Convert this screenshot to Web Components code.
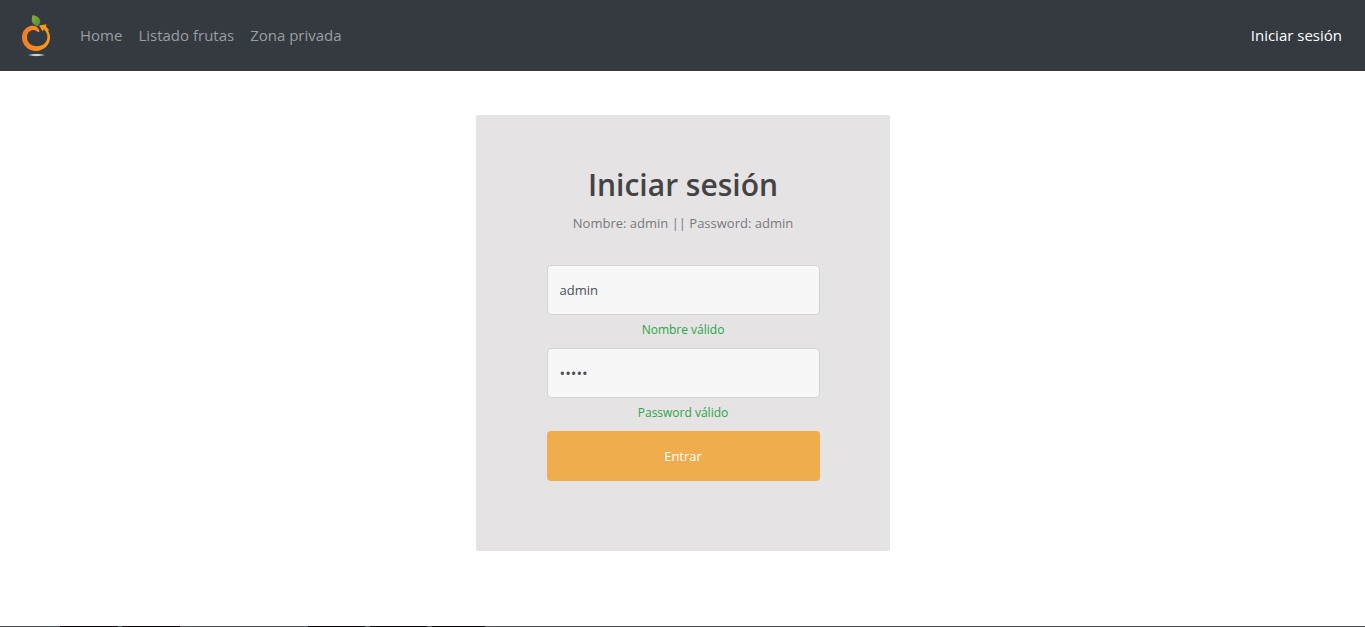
<!DOCTYPE html>
<html lang="es">
<head>
<meta charset="utf-8">
<meta name="viewport" content="width=device-width, initial-scale=1">
<title>Iniciar sesión</title>
<style>
  body { margin: 0; background: #fff; font-family: "Open Sans", "Noto Sans", sans-serif; }
</style>
</head>
<body>
<fruit-app></fruit-app>
<script>
class ShadowElement extends HTMLElement {
  constructor() {
    super();
    this.attachShadow({ mode: "open" }).innerHTML = this.render();
  }
}

customElements.define("fruit-logo", class extends ShadowElement {
  render() {
    return `
      <style>
        :host { display: block; width: 50px; height: 50px; }
        svg { display: block; }
      </style>
      <svg width="50" height="50" viewBox="0 0 50 50" role="img" aria-label="Frutas">
        <defs>
          <linearGradient id="peel" x1="0" x2="1"><stop offset="0" stop-color="#f47c20"/><stop offset="1" stop-color="#fb9b1c"/></linearGradient>
          <linearGradient id="leaf" x1="0" x2="1" y2="1"><stop offset="0" stop-color="#8ab23c"/><stop offset="1" stop-color="#55892f"/></linearGradient>
          <radialGradient id="shade"><stop offset="0" stop-color="#f4f4f4"/><stop offset=".6" stop-color="#bfc1c3"/><stop offset="1" stop-color="#6b6f74"/></radialGradient>
        </defs>
        <path fill="url(#peel)" d="M27.500 21C26 16.500 22.500 15.500 19.500 15.800C13.800 16.800 10 21.500 10 27.300C10 35.300 16.300 41 24 41C31.800 41 38 35 38 27.600C38 24.300 36.800 21.500 34.700 19.300L32.500 20.100C34.600 22.300 35.400 24.500 35.400 27C35.400 32.400 30.800 36.300 25 36.300C19 36.300 15 32.300 15 27C15 22.700 18 20 21.500 19.900C23.800 19.900 25 21.500 27 22.300Z"/>
        <path fill="#fb961d" d="M27 15.400L34.600 14.200L33.900 16.500L37 19.900L35 22.200L32 19.300L30.700 21.500Z"/>
        <path fill="url(#leaf)" d="M20.700 5C25.500 6 28.900 8.700 28.200 12.700L25.800 16.200C21.500 15.400 18 11.900 20.700 5Z"/>
        <ellipse cx="24.500" cy="45" rx="8.500" ry="1.200" fill="url(#shade)"/>
      </svg>`;
  }
});

customElements.define("nav-link", class extends HTMLElement {
  connectedCallback() {
    if (this.shadowRoot) return;
    this.attachShadow({ mode: "open" }).innerHTML = `
      <style>
        :host { display: block; }
        a { display: block; padding: 8px; font-size: 15px; line-height: 24px; text-decoration: none; color: #9a9da0; }
        :host([active]) a { color: #fff; }
      </style>
      <a href="${this.getAttribute("to")}"><slot></slot></a>`;
  }
});

customElements.define("nav-bar", class extends ShadowElement {
  render() {
    return `
      <style>
        :host { display: block; background: #343a40; }
        nav { display: flex; align-items: center; padding: 10px 15px 11px 12px; }
        .links { display: flex; flex: 1; margin-left: 10px; }
      </style>
      <nav>
        <fruit-logo></fruit-logo>
        <div class="links">
          <nav-link to="#home">Home</nav-link>
          <nav-link to="#frutas">Listado frutas</nav-link>
          <nav-link to="#privada">Zona privada</nav-link>
        </div>
        <nav-link to="#login" active>Iniciar sesión</nav-link>
      </nav>`;
  }
});

customElements.define("form-field", class extends HTMLElement {
  connectedCallback() {
    if (this.shadowRoot) return;
    const get = name => this.getAttribute(name);
    this.attachShadow({ mode: "open" }).innerHTML = `
      <style>
        :host { display: block; }
        input { display: block; box-sizing: border-box; width: 100%; height: 50px; margin: 0; padding: 6px 12px;
          border: 1px solid #d3d3d3; border-radius: 4px; outline: 0; background: #f7f7f7;
          color: #495057; font: 13px/24px "Open Sans", "Noto Sans", sans-serif; }
        input[type=password] { font-size: 15px; }
        p { margin: 0; padding: 5px 0 8px; text-align: center; font-size: 12px; line-height: 20px; color: #28a745; }
      </style>
      <input id="field" type="${get("type")}" value="${get("value")}" aria-label="${get("label")}" aria-describedby="hint">
      <p id="hint"><slot></slot></p>`;
  }
});

customElements.define("login-card", class extends ShadowElement {
  render() {
    return `
      <style>
        :host { display: block; box-sizing: border-box; width: 100%; max-width: 414px; padding: 50px 70px 70px 71px;
          border-radius: 2px; background: #e5e3e4; text-align: center; }
        h1 { margin: 0; font-size: 30px; line-height: 40px; font-weight: 600; color: #434343; white-space: nowrap; }
        .hint { margin: 8px 0 31px; font-size: 13px; line-height: 21px; color: #7a7a7a; white-space: nowrap; }
        form { margin: 0; }
        button { display: block; width: 100%; height: 50px; padding: 0; border: 0; border-radius: 4px; background: #f0ad4e;
          color: #fff; font: 13px/24px "Open Sans", "Noto Sans", sans-serif; }
      </style>
      <h1>Iniciar sesión</h1>
      <p class="hint">Nombre: admin || Password: admin</p>
      <form>
        <form-field type="text" label="Nombre" value="admin">Nombre válido</form-field>
        <form-field type="password" label="Password" value="admin">Password válido</form-field>
        <button type="submit">Entrar</button>
      </form>`;
  }
});

customElements.define("fruit-app", class extends ShadowElement {
  render() {
    return `
      <style>
        :host { display: flex; flex-direction: column; min-height: 100vh; }
        main { flex: 1; display: flex; justify-content: center; align-items: flex-start; padding: 44px 0; }
        footer { height: 1px; background: linear-gradient(90deg, #484d57 60px, #08060b 60px 118px, #484d57 118px 122px, #08060b 122px 180px,
          #484d57 180px 308px, #08060b 308px 365px, #484d57 365px 370px, #08060b 370px 427px, #484d57 427px 432px, #08060b 432px 485px, #484d57 485px); }
      </style>
      <nav-bar></nav-bar>
      <main><login-card></login-card></main>
      <footer></footer>`;
  }
});
</script>
</body>
</html>
